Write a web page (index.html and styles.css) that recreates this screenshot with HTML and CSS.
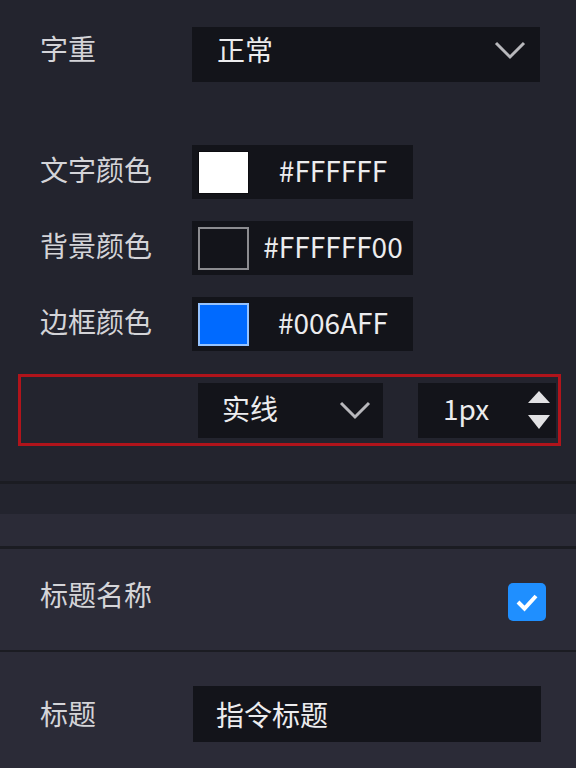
FILE: index.html
```html
<!DOCTYPE html>
<html>

<head>
    <meta charset="UTF-8">
    <title>样式设置</title>
    <link rel="stylesheet" href="styles.css">
</head>

<body>
    <div class="panel">
        <!-- 文字样式 -->
        <section class="group style-group">
            <div class="field weight-row">
                <span class="label">字重</span>
                <div class="select wide">
                    <span class="value">正常</span>
                    <svg class="chevron" width="32" height="19" viewBox="0 0 32 19">
                        <polyline points="2,2 16,16 30,2" fill="none" stroke="#b8b8bc" stroke-width="3" />
                    </svg>
                </div>
            </div>

            <div class="field color-row">
                <span class="label">文字颜色</span>
                <div class="color-box">
                    <span class="swatch white"></span>
                    <span class="hex">#FFFFFF</span>
                </div>
            </div>
            <div class="field color-row">
                <span class="label">背景颜色</span>
                <div class="color-box">
                    <span class="swatch clear"></span>
                    <span class="hex">#FFFFFF00</span>
                </div>
            </div>
            <div class="field color-row">
                <span class="label">边框颜色</span>
                <div class="color-box">
                    <span class="swatch blue"></span>
                    <span class="hex">#006AFF</span>
                </div>
            </div>

            <div class="border-row">
                <div class="select line-type">
                    <span class="value">实线</span>
                    <svg class="chevron" width="32" height="19" viewBox="0 0 32 19">
                        <polyline points="2,2 16,16 30,2" fill="none" stroke="#b8b8bc" stroke-width="3" />
                    </svg>
                </div>
                <div class="number">
                    <span class="value">1px</span>
                    <div class="spin">
                        <svg width="24" height="14" viewBox="0 0 24 14">
                            <polygon points="12,1 23,13 1,13" fill="#e2e2e4" />
                        </svg>
                        <svg width="24" height="16" viewBox="0 0 24 16">
                            <polygon points="1,1 23,1 12,15" fill="#e2e2e4" />
                        </svg>
                    </div>
                </div>
            </div>
        </section>

        <div class="spacer"></div>

        <!-- 标题 -->
        <section class="group title-group">
            <div class="group-head"></div>
            <div class="field check-row">
                <span class="label">标题名称</span>
                <span class="checkbox">
                    <svg width="28" height="28" viewBox="0 0 28 28">
                        <polyline points="5,14 11.5,20.5 23,8" fill="none" stroke="#fff" stroke-width="4" />
                    </svg>
                </span>
            </div>
            <div class="field title-row">
                <span class="label">标题</span>
                <div class="input">指令标题</div>
            </div>
        </section>
    </div>
</body>

</html>
```

FILE: styles.css
```css
body {
    margin: 0;
    background-color: #23242e;
    font-family: "Noto Sans CJK SC", "Noto Sans", sans-serif;
    color: #dcdce0;
}

.panel {
    width: 576px;
}

.field {
    display: flex;
    align-items: center;
    padding-left: 40px;
}

.label {
    width: 152px;
    font-size: 28px;
    line-height: 1;
    margin-top: -6px;
    color: #d4d4d8;
}

.value {
    font-size: 28px;
    line-height: 1;
    margin-top: -4px;
    color: #ececee;
}

/* 上半部分 */

.style-group {
    padding-top: 27px;
    padding-bottom: 35px;
    border-bottom: 3px solid #1b1c22;
}

.select {
    display: flex;
    align-items: center;
    justify-content: space-between;
    box-sizing: border-box;
    height: 55px;
    background-color: #13141a;
}

.select.wide {
    width: 348px;
    padding: 0 14px 8px 25px;
}

.weight-row {
    margin-bottom: 63px;
}

.weight-row .label {
    margin-top: -14px;
}

.color-row {
    margin-bottom: 22px;
}

.color-box {
    display: flex;
    align-items: center;
    width: 221px;
    height: 54px;
    padding-left: 6px;
    box-sizing: border-box;
    background-color: #13141a;
}

.swatch {
    width: 51px;
    height: 43px;
    box-sizing: border-box;
}

.swatch.white {
    background-color: #fff;
    border: 1px solid #0c0c10;
}

.swatch.clear {
    background-color: #13141a;
    border: 2px solid #8c8c90;
}

.swatch.blue {
    background-color: #006aff;
    border: 2px solid #95c3ff;
}

.hex {
    flex: 1;
    text-align: center;
    font-size: 28px;
    line-height: 1;
    margin-top: -4px;
    padding-left: 4px;
    color: #ececee;
}

.border-row {
    display: flex;
    align-items: center;
    margin-left: 18px;
    margin-top: 23px;
    width: 543px;
    height: 72px;
    box-sizing: border-box;
    border: 3px solid #b0141b;
    padding: 0 2px 0 177px;
}

.select.line-type {
    flex-shrink: 0;
    width: 185px;
    padding: 0 12px 0 24px;
}

.number {
    display: flex;
    flex-shrink: 0;
    align-items: center;
    justify-content: space-between;
    width: 138px;
    height: 55px;
    margin-left: 35px;
    padding: 0 5px 0 25px;
    box-sizing: border-box;
    background-color: #13141a;
}

.spin {
    display: flex;
    flex-direction: column;
    gap: 10px;
}

.spin svg {
    display: block;
}

/* 下半部分 */

.spacer {
    height: 30px;
}

.title-group {
    background-color: #2b2b37;
}

.group-head {
    height: 32px;
    border-bottom: 3px solid #1b1c22;
}

.check-row {
    align-items: flex-start;
    justify-content: space-between;
    height: 103px;
    padding-top: 34px;
    padding-right: 30px;
    box-sizing: border-box;
    border-bottom: 2px solid #1b1c22;
}

.check-row .label {
    margin-top: -3px;
}

.checkbox {
    display: flex;
    align-items: center;
    justify-content: center;
    width: 38px;
    height: 38px;
    border-radius: 5px;
    background-color: #1f8fff;
}

.title-row {
    padding-top: 34px;
    padding-bottom: 26px;
}

.title-row .label {
    width: 153px;
    margin-top: -2px;
}

.input {
    display: flex;
    align-items: center;
    width: 348px;
    height: 56px;
    padding-left: 23px;
    box-sizing: border-box;
    background-color: #13141a;
    font-size: 28px;
    color: #ececee;
}
```
